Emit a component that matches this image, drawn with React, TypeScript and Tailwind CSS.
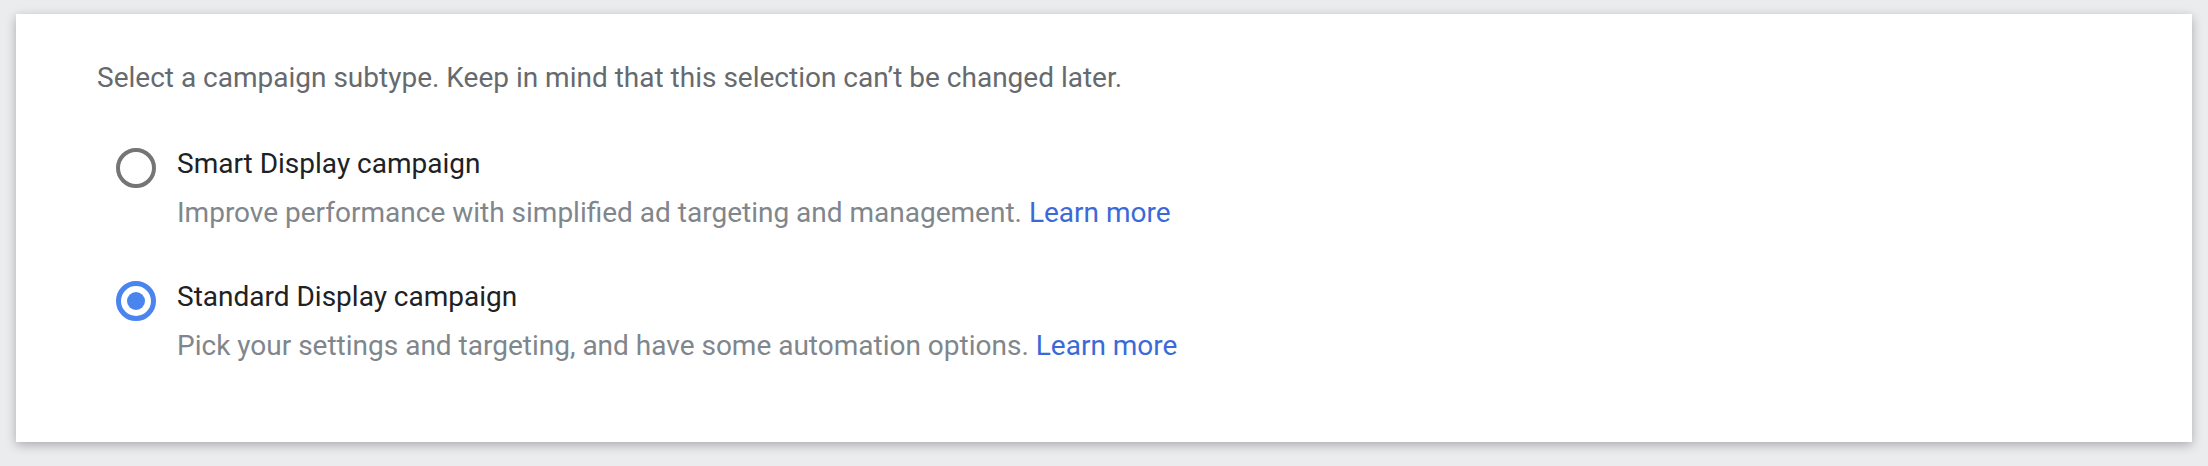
import { FC } from "react";

type OptionProps = {
    title: string;
    desc: string;
    selected?: boolean;
};

const Radio: FC<{ selected?: boolean }> = ({ selected }) => {
    if (selected) {
        return (
            <div className="mt-[2px] flex size-10 shrink-0 items-center justify-center rounded-full border-[5px] border-[#4a84ee]">
                <div className="size-[18px] rounded-full bg-[#4a84ee]" />
            </div>
        );
    }
    return <div className="mt-[2px] size-10 shrink-0 rounded-full border-[4px] border-[#757575]" />;
};

const Option: FC<OptionProps> = ({ title, desc, selected }) => {
    return (
        <div className="flex gap-[21px]">
            <Radio selected={selected} />
            <div>
                <div className="text-[28px] leading-9 text-[#202124]">{title}</div>
                <div className="mt-[13px] text-[28px] leading-9 text-[#80868b]">
                    {desc} <span className="text-[#3b6ad8]">Learn more</span>
                </div>
            </div>
        </div>
    );
};

export default function App() {
    return (
        <div className="h-[466px] w-full bg-[#ebecee] pl-4 pr-4 pt-[14px] font-['Roboto',sans-serif]">
            <div className="h-[428px] bg-white pl-[81px] pt-[46px] shadow-[0_3px_10px_rgba(0,0,0,0.28)]">
                <div className="text-[28px] leading-9 text-[#666a6e]">
                    Select a campaign subtype. Keep in mind that this selection can’t be changed later.
                </div>
                <div className="mt-[50px] flex flex-col gap-12 pl-[19px]">
                    <Option
                        title="Smart Display campaign"
                        desc="Improve performance with simplified ad targeting and management."
                    />
                    <Option
                        title="Standard Display campaign"
                        desc="Pick your settings and targeting, and have some automation options."
                        selected
                    />
                </div>
            </div>
        </div>
    );
}
